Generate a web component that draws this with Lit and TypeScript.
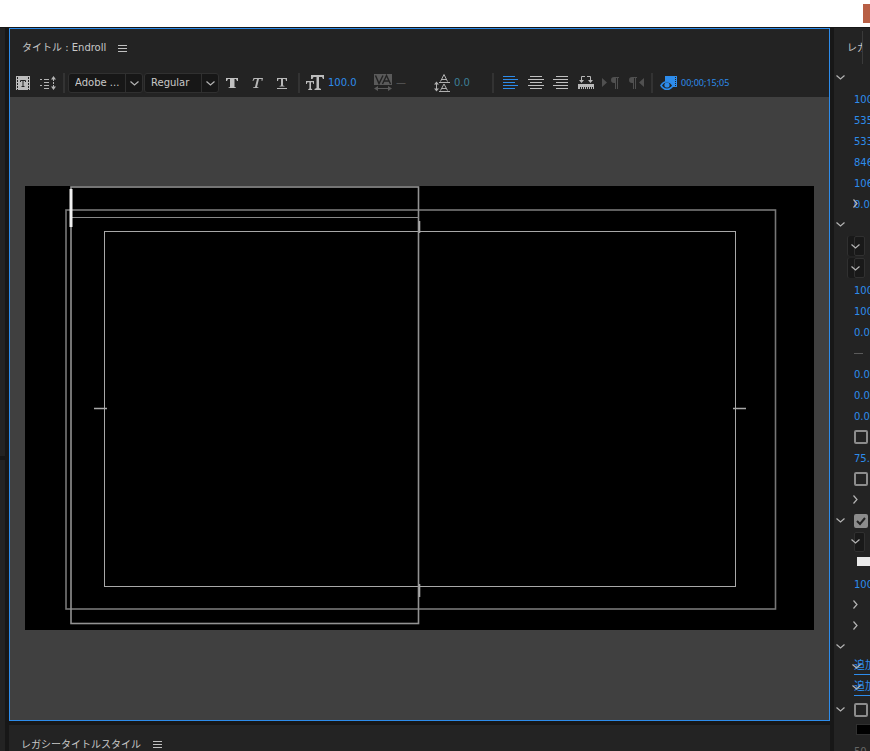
import { LitElement, html, svg, css, nothing } from "lit";
import { customElement, property } from "lit/decorators.js";
import { classMap } from "lit/directives/class-map.js";

const chevron = (open: boolean) => html`<svg width="9" height="9" viewBox="0 0 9 9" aria-hidden="true">
  <path d=${open ? "M0.5 2.5L4.5 6L8.5 2.5" : "M1.5 0.5L5 4.5L1.5 8.5"} fill="none" stroke="#b4b4b4" stroke-width="1.2" />
</svg>`;

const burger = html`<svg width="9" height="7" viewBox="0 0 9 7" aria-hidden="true">
  <path d="M0 .5H9M0 3.5H9M0 6.5H9" stroke="#c0c0c0" />
</svg>`;

const icon = (w: number, h: number, body: unknown) =>
  html`<svg width=${w} height=${h} viewBox="0 0 ${w} ${h}" aria-hidden="true">${body}</svg>`;

const pilcrow = svg`<path d="M4 0H9V1H8V12H7V1H6V12H5V6H4A3 3 0 0 1 4 0Z" fill="#505050" />`;

const icons = {
  template: icon(14, 14, svg`
    <path fill="#bcbcbc" d="M0 0H14V14H0Z" />
    <path d="M1.5 1V14M12.5 1V14" stroke="#222" stroke-dasharray="2 1" />
    <path d="M4.5 6V4.5H9.5V6M7 4.5V10M5.5 10.5H8.5" fill="none" stroke="#222" />`),
  roll: icon(18, 14, svg`
    <path d="M1 3.5H3M1 9.5H3M5 3.5H10M5 6.5H10M5 9.5H10M5 12.5H10" stroke="#b4b4b4" />
    <path d="M14.5 3V12" stroke="#b4b4b4" stroke-dasharray="2 1" />
    <path d="M12 3.5L14.5 0L17 3.5ZM12 10.5L14.5 14L17 10.5Z" fill="#b4b4b4" />`),
  bold: icon(12, 12, svg`<path d="M0 1H12V4H11L10 2H8.5V10L10 10.5V11H2.5V10.5L4 10V2H2L1 4H0Z" fill="#c0c0c0" />`),
  italic: icon(12, 12, svg`<path d="M2.5 1H12L11.3 4H10.6V2H8L6 10L7.5 10.4V11H2V10.4L4 10L6 2H3.6L2.2 4H1.5Z" fill="#b8b8b8" />`),
  underline: icon(12, 14, svg`<path d="M1 2H11V5H10L9.5 3H7V9.4L8.5 10V10.5H3.5V10L5 9.4V3H2.5L2 5H1ZM1 12H11V13H1Z" fill="#b8b8b8" />`),
  size: icon(18, 16, svg`
    <path d="M5 0H18V4H17L16 2H13V13L15 14V15H8.5V14L10.5 13V2H7.5L6.5 4H5Z" fill="#bcbcbc" />
    <path d="M0 6H8V9H7.3L6.8 7.2H5V13.6L6.2 14.2V15H2.2V14.2L3.4 13.6V7.2H1.4L.8 9H0Z" fill="#bcbcbc" />`),
  tracking: icon(18, 18, svg`
    <path fill="#5a5a5a" d="M0 0H18V11H0Z" />
    <path d="M1.5 1.5L5 9.5L9 1.5M8.5 10L12.5 1.5L16.5 10M10 7H15" fill="none" stroke="#222" stroke-width="1.4" />
    <path d="M2 14.5H16" stroke="#5a5a5a" /><path d="M0 14.5L4 12V17ZM18 14.5L14 12V17Z" fill="#5a5a5a" />`),
  leading: icon(16, 18, svg`
    <path d="M6.5 7.5L10 .5L13.5 7.5M8 5.5H12M5 8.5H16M6.5 16.5L10 10L13.5 16.5M8 14.5H12M5 17.5H16M2.5 9V16" fill="none" stroke="#b0b0b0" />
    <path d="M0 10.5L2.5 7.5L5 10.5ZM0 14.5L2.5 17.5L5 14.5Z" fill="#b0b0b0" />`),
  left: icon(16, 14, svg`<path d="M0 .5H12M0 3.5H15M0 6.5H12M0 9.5H15M0 12.5H12" stroke="#2d8ceb" />`),
  center: icon(16, 14, svg`<path d="M2 .5H14M0 3.5H16M2 6.5H14M0 9.5H16M2 12.5H14" stroke="#c0c0c0" />`),
  right: icon(16, 14, svg`<path d="M3 .5H15M0 3.5H15M3 6.5H15M0 9.5H15M3 12.5H15" stroke="#c0c0c0" />`),
  tabs: icon(16, 14, svg`
    <path d="M3.5 5V.5H7M9 .5H12.5V5" fill="none" stroke="#b8b8b8" />
    <path d="M1 4H6L3.5 7ZM10 4H15L12.5 7ZM0 8H16V13H15V11H14V13H13V11H12V13H11V11H10V13H9V11H8V13H7V11H6V13H5V11H4V13H3V11H2V13H0Z" fill="#b8b8b8" />`),
  ltr: icon(18, 12, svg`<path d="M0 1L5 5.5L0 10Z" fill="#505050" /><g transform="translate(8 0)">${pilcrow}</g>`),
  rtl: icon(18, 12, svg`<g transform="translate(1 0)">${pilcrow}</g><path d="M17 1L12 5.5L17 10Z" fill="#505050" />`),
  eye: icon(18, 16, svg`
    <path d="M5 1H17V12H13C11 7 7 5 5 7Z" fill="#2d8ceb" />
    <path d="M15.5 2V12" stroke="#232323" stroke-dasharray="1 1" />
    <path d="M1 10.5C4 5.5 10 5.5 13 10.5C10 15.5 4 15.5 1 10.5Z" fill="#232323" stroke="#2d8ceb" stroke-width="1.6" />
    <circle cx="7" cy="10" r="2.6" fill="#2d8ceb" />`),
};

@customElement("tool-button")
class ToolButton extends LitElement {
  @property() name: keyof typeof icons = "bold";
  static styles = css`
    :host { display: block; flex: none; width: 25px; }
    button { display: grid; place-items: center; width: 25px; height: 24px; padding: 0 0 0 1px; border: 0; background: none; box-sizing: border-box; }
    svg { display: block; }
  `;
  render() {
    return html`<button type="button" aria-label=${this.name}>${icons[this.name]}</button>`;
  }
}

type Row = {
  tall?: boolean; caret?: "open"; inner?: "open" | "closed"; value?: string; dash?: boolean;
  combo?: "wide" | "narrow"; check?: "on" | "off"; swatch?: "white" | "black"; link?: string; text?: string;
};

const rows: Row[] = [
  { caret: "open" },
  { value: "100.0" }, { value: "535.0" }, { value: "533.0" }, { value: "846.0" }, { value: "106.0" },
  { inner: "closed", value: "0.0" },
  { caret: "open" },
  { tall: true, combo: "wide" }, { tall: true, combo: "wide" },
  { value: "100.0" }, { value: "100.0" }, { value: "0.0" }, { dash: true },
  { value: "0.0" }, { value: "0.0" }, { value: "0.0" },
  { check: "off" }, { value: "75.0" }, { check: "off" },
  { inner: "closed" },
  { caret: "open", check: "on" },
  { combo: "narrow" }, { swatch: "white" }, { value: "100.0" },
  { inner: "closed" }, { inner: "closed" },
  { caret: "open" },
  { inner: "open", link: "追加" }, { inner: "open", link: "追加" },
  { caret: "open", check: "off" },
  { swatch: "black" }, { text: "50" },
];

@customElement("property-panel")
class PropertyPanel extends LitElement {
  static styles = css`
    :host { display: block; overflow: hidden; background: #232323; color: #c8c8c8; }
    svg { display: block; }
    header { display: flex; align-items: center; height: 39px; padding-left: 13px; }
    h2 { display: flex; align-items: center; width: 15px; height: 33px; margin: 0; overflow: hidden; border-right: 1px solid #3a3a3a; font: inherit; white-space: nowrap; }
    .row { display: grid; grid-template-columns: 18px 50px; align-items: center; height: 21px; padding-left: 2px; }
    .tall { height: 22px; }
    .cell { grid-column: 2; display: grid; align-items: center; }
    .cell > * { grid-area: 1 / 1; }
    .inner { margin-left: -2px; z-index: 1; }
    input[type="text"] { width: 48px; padding: 2px 0 0; border: 0; outline: 0; background: none; color: #2d8ceb; font: inherit; }
    input[type="checkbox"] { appearance: none; box-sizing: border-box; width: 14px; height: 14px; margin: 0; border: 2px solid #8c8c8c; border-radius: 2px; }
    input:checked { background: #8c8c8c; }
    .tick { margin-left: 2px; z-index: 1; pointer-events: none; }
    .dash { width: 9px; height: 1px; margin-top: 2px; background: #5a5a5a; }
    select { appearance: none; box-sizing: border-box; width: 11px; height: 20px; padding: 0; border: 1px solid #303030; border-radius: 2px; background: #191919; color: #c8c8c8; font: inherit; }
    .wide { box-shadow: -6px 0 0 #191919, -7px 0 0 #303030; }
    .arrow { margin-left: -3px; z-index: 1; pointer-events: none; }
    .swatch { width: 20px; height: 9px; margin: 0 0 2px 3px; padding: 0; border: 0; background: #eaeaea; }
    .black { background: #000; outline: 1px solid #303030; }
    .links { align-items: start; }
    a { color: #2d8ceb; font-size: 11px; line-height: 17px; text-decoration: none; border-bottom: 1px solid #2d8ceb; white-space: nowrap; justify-self: start; }
    .text { color: #666; }
  `;
  row(r: Row) {
    return html`<div class=${classMap({ row: true, tall: !!r.tall, links: !!r.link })}>
      ${r.caret ? html`<span class="caret">${chevron(true)}</span>` : nothing}
      <div class="cell">
        ${r.value ? html`<input type="text" aria-label="値" .value=${r.value} />` : nothing}
        ${r.dash ? html`<span class="dash"></span>` : nothing}
        ${r.combo ? html`<select aria-label="項目" class=${r.combo}><option></option></select><span class="arrow">${chevron(true)}</span>` : nothing}
        ${r.check ? html`<input type="checkbox" aria-label="有効" ?checked=${r.check === "on"} />` : nothing}
        ${r.check === "on" ? html`<svg class="tick" width="10" height="10" viewBox="0 0 10 10"><path d="M1 5L4 8L9 2" fill="none" stroke="#232323" stroke-width="2" /></svg>` : nothing}
        ${r.swatch ? html`<button type="button" aria-label="カラー" class="swatch ${r.swatch}"></button>` : nothing}
        ${r.link ? html`<a href="#">${r.link}</a>` : nothing}
        ${r.text ? html`<span class="text">${r.text}</span>` : nothing}
        ${r.inner ? html`<span class="inner">${chevron(r.inner === "open")}</span>` : nothing}
      </div>
    </div>`;
  }
  render() {
    return html`<header><h2>レガシー</h2></header>${rows.map((r) => this.row(r))}`;
  }
}

@customElement("app-root")
class AppRoot extends LitElement {
  static styles = css`
    :host { display: flex; flex-direction: column; height: 100vh; overflow: hidden; background: #171717; color: #c8c8c8;
      font: 10px/14px "DejaVu Sans", "Noto Sans CJK JP", sans-serif; }
    svg { display: block; flex: none; }
    .top { flex: none; display: flex; justify-content: flex-end; align-items: center; height: 27px; background: #fff; }
    .close { width: 7px; height: 19px; padding: 0; border: 0; background: #b85f45; }
    .work { flex: 1; min-height: 0; display: flex; gap: 4px; padding-top: 1px; }
    .strip { flex: none; width: 5px; display: flex; flex-direction: column; gap: 4px; }
    .strip div { background: #232323; flex: 291; }
    .strip div:first-child { flex: 428; }
    .main { flex: 1; min-width: 0; display: flex; flex-direction: column; gap: 4px; }
    property-panel { flex: none; width: 36px; }
    .panel { flex: 1; min-height: 0; display: flex; flex-direction: column; border: 1px solid #2d8ceb; background: #232323; }
    .head { flex: none; display: flex; align-items: center; gap: 12px; height: 39px; padding-left: 12px; }
    .panel .head { height: 38px; padding: 0 0 2px 12px; }
    h1, h2 { margin: 0; font: inherit; white-space: pre; }
    .menu { padding: 0; border: 0; background: none; }
    .styles { flex: none; height: 26px; overflow: hidden; background: #232323; }
    .bar { flex: none; display: flex; align-items: center; height: 28px; overflow: hidden; }
    .sep { flex: none; display: grid; place-items: center; width: 10px; }
    .slim { width: 8px; }
    .sep::before { content: ""; width: 2px; height: 20px; background: #333; }
    .combo { flex: none; display: grid; grid-template-columns: 1fr 18px; align-items: center; width: 75px; margin-right: 1px; }
    .combo.last { margin-right: 0; }
    .combo select { grid-area: 1 / 1 / 2 / 3; appearance: none; width: 100%; height: 20px; box-sizing: border-box; padding: 0 18px 0 6px;
      border: 1px solid #303030; border-radius: 3px; background: #171717; color: #c8c8c8; font: inherit; }
    .combo span { grid-area: 1 / 2; display: grid; place-items: center; height: 18px; border-left: 1px solid #303030; pointer-events: none; }
    .field { flex: none; display: flex; align-items: center; gap: 4px; width: 60px; }
    .size { width: 68px; padding-left: 2px; }
    .lead { width: 54px; }
    .field input { flex: 1; width: 10px; min-width: 0; padding: 0; border: 0; outline: 0; background: none; color: #2d8ceb; font: inherit; }
    .field .off { color: #5a5a5a; }
    .field .dim { color: #3d7f98; }
    .time { color: #2d8ceb; font: 9px/14px "Noto Sans", sans-serif; }
    .canvas { flex: 1; min-height: 0; display: flex; align-items: center; padding: 0 15px 1px; background: #404040; }
    .stage { flex: 1; min-width: 0; background: #000; }
    .stage svg { width: 100%; height: auto; }
  `;
  render() {
    return html`
      <div class="top"><button class="close" type="button" aria-label="閉じる"></button></div>
      <div class="work">
        <div class="strip"><div></div><div></div></div>
        <div class="main">
          <section class="panel">
            <div class="head"><h1>タイトル : Endroll</h1><button class="menu" type="button" aria-label="メニュー">${burger}</button></div>
            <div class="bar">
              <tool-button name="template"></tool-button><tool-button name="roll"></tool-button>
              <span class="sep slim"></span>
              <div class="combo"><select aria-label="フォント"><option>Adobe ...</option></select><span>${chevron(true)}</span></div>
              <div class="combo last"><select aria-label="スタイル"><option>Regular</option></select><span>${chevron(true)}</span></div>
              <tool-button name="bold"></tool-button><tool-button name="italic"></tool-button><tool-button name="underline"></tool-button>
              <span class="sep"></span>
              <label class="field size">${icons.size}<input type="text" aria-label="サイズ" value="100.0" /></label>
              <label class="field">${icons.tracking}<input class="off" type="text" aria-label="カーニング" value="—" /></label>
              <label class="field lead">${icons.leading}<input class="dim" type="text" aria-label="行間" value="0.0" /></label>
              <span class="sep"></span>
              <tool-button name="left"></tool-button><tool-button name="center"></tool-button><tool-button name="right"></tool-button>
              <tool-button name="tabs"></tool-button><tool-button name="ltr"></tool-button><tool-button name="rtl"></tool-button>
              <span class="sep slim"></span>
              <tool-button name="eye"></tool-button><span class="time">00;00;15;05</span>
            </div>
            <div class="canvas"><div class="stage">
              <svg viewBox="0 0 789 444" fill="none">
                <rect x="41" y="24" width="709.5" height="399" stroke="#777" stroke-width="1.6" />
                <rect x="79.5" y="45.5" width="631" height="355" stroke="#a8a8a8" />
                <rect x="46" y="1" width="347.5" height="436.5" stroke="#929292" stroke-width="1.6" />
                <path d="M46 31.5H394" stroke="#888" />
                <path d="M69 222.5H82M708 222.5H721M394.5 35V47M394.5 398V411" stroke="#a8a8a8" stroke-width="1.6" />
                <path d="M46 3V41" stroke="#f0f0f0" stroke-width="3" />
              </svg>
            </div></div>
          </section>
          <section class="styles"><div class="head"><h2>レガシータイトルスタイル</h2><button class="menu" type="button" aria-label="メニュー">${burger}</button></div></section>
        </div>
        <property-panel></property-panel>
      </div>`;
  }
}
